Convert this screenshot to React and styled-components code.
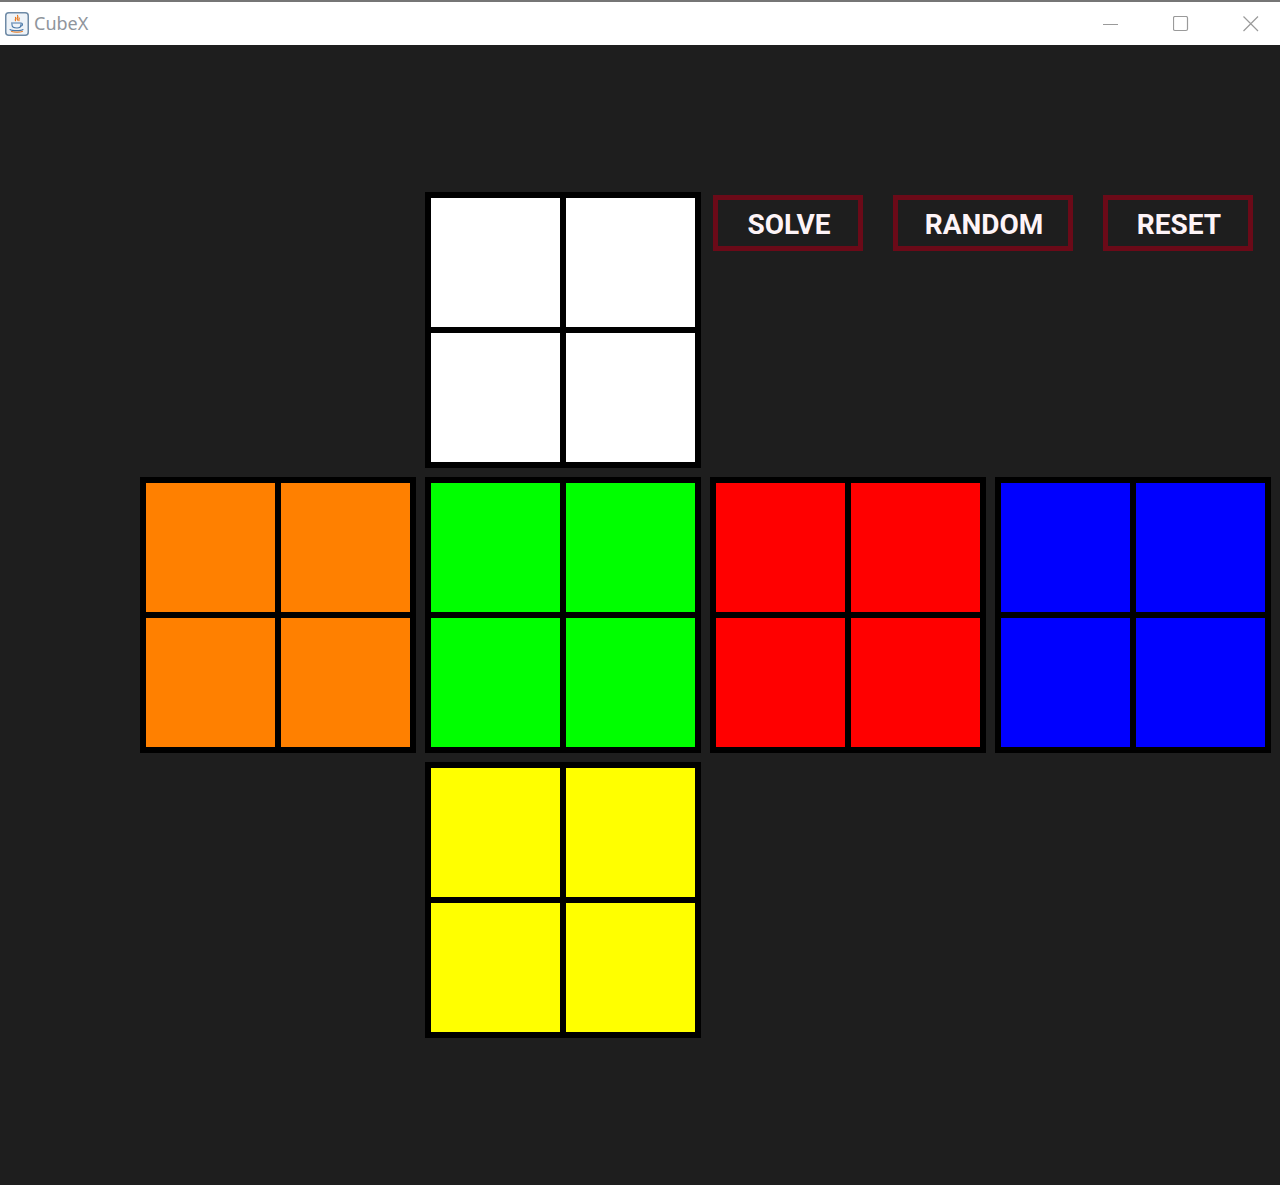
import React from "react";
import styled, { createGlobalStyle } from "styled-components";

const Global = createGlobalStyle`
  html, body { margin: 0; padding: 0; }
  body { background: #1e1e1e; font-family: "Roboto", "Liberation Sans", sans-serif; }
  #root { min-height: 1185px; }
`;

const Window = styled.div`
  width: 1280px;
  height: 1185px;
  display: flex;
  flex-direction: column;
  background: #1e1e1e;
  overflow: hidden;
`;

const TitleBar = styled.div`
  height: 43px;
  border-top: 2px solid #767676;
  background: #ffffff;
  display: flex;
  align-items: center;
  flex-shrink: 0;
`;

const AppIcon = styled.svg`
  margin-left: 5px;
  width: 24px;
  height: 24px;
  flex-shrink: 0;
`;

const Title = styled.span`
  margin-left: 5px;
  font-family: "Noto Sans", "Open Sans", sans-serif;
  font-size: 18px;
  color: #8f959c;
  line-height: 1;
  padding-bottom: 2px;
`;

const Controls = styled.div`
  margin-left: auto;
  padding-right: 21px;
  display: flex;
  align-items: center;
  gap: 54px;
  height: 100%;
`;

const ControlButton = styled.div`
  width: 16px;
  height: 16px;
  display: flex;
  align-items: center;
  justify-content: center;
  color: #9a9a9a;
`;

const Stage = styled.div`
  flex: 1;
  padding: 147px 0 0 140px;
`;

const Net = styled.div`
  display: grid;
  grid-template-columns: repeat(4, 276px);
  grid-template-rows: repeat(3, 276px);
  gap: 9px;
`;

const Face = styled.div`
  grid-column: ${(p) => p.$col};
  grid-row: ${(p) => p.$row};
  background: #000;
  padding: 6px;
  display: grid;
  grid-template-columns: 129px 129px;
  grid-template-rows: 129px 129px;
  gap: 6px;
`;

const Sticker = styled.div`
  background: ${(p) => p.$color};
`;

const ButtonBar = styled.div`
  grid-column: 3 / span 2;
  grid-row: 1;
  display: flex;
  align-items: flex-start;
  gap: 30px;
  padding: 3px 0 0 3px;
`;

const ActionButton = styled.button`
  width: ${(p) => p.$w}px;
  height: 56px;
  box-sizing: border-box;
  border: 5px solid #6b0a18;
  background: transparent;
  color: #fdf4f7;
  font-family: "Roboto", "Liberation Sans", sans-serif;
  font-weight: 700;
  font-size: 28px;
  letter-spacing: 0px;
  padding: 3px 0 0 2px;
  display: flex;
  align-items: center;
  justify-content: center;
  cursor: pointer;
`;

const faces = [
  { col: 2, row: 1, color: "#ffffff" },
  { col: 1, row: 2, color: "#ff8000" },
  { col: 2, row: 2, color: "#00ff00" },
  { col: 3, row: 2, color: "#ff0000" },
  { col: 4, row: 2, color: "#0000ff" },
  { col: 2, row: 3, color: "#ffff00" },
];

const buttons = [
  { label: "SOLVE", w: 150 },
  { label: "RANDOM", w: 180 },
  { label: "RESET", w: 150 },
];

export default function App() {
  return (
    <>
      <Global />
      <Window>
        <TitleBar>
          <AppIcon viewBox="0 0 24 24">
            <rect x="0.75" y="0.75" width="22.5" height="22.5" rx="3" fill="#eef3f8" stroke="#6e8aa6" strokeWidth="1.5" />
            <path d="M12.5 3.5c1.5 1.5-1.5 2.5 0 4.5M10.5 5.5c1 1-1 2 0 3.2M14 6c.8.8-.8 1.6 0 2.6" stroke="#e8761a" strokeWidth="1.2" fill="none" strokeLinecap="round" />
            <path d="M6 11h10c2 0 2 3 0 3h-1" stroke="#4a78a8" strokeWidth="1.1" fill="none" />
            <path d="M7 11.5v1.5c0 2 2 3 5 3s4-1 4-3v-1.5" stroke="#4a78a8" strokeWidth="1.1" fill="none" />
            <path d="M5 17.5c2 1.5 11 1.5 13 0" stroke="#4a78a8" strokeWidth="1.1" fill="none" strokeLinecap="round" />
            <path d="M6.5 19.5c2.5 1 8.5 1 11 0" stroke="#e8761a" strokeWidth="1" fill="none" strokeLinecap="round" />
          </AppIcon>
          <Title>CubeX</Title>
          <Controls>
            <ControlButton>
              <svg width="16" height="16" viewBox="0 0 16 16">
                <line x1="0" y1="8.5" x2="15" y2="8.5" stroke="currentColor" strokeWidth="1" />
              </svg>
            </ControlButton>
            <ControlButton>
              <svg width="16" height="16" viewBox="0 0 16 16">
                <rect x="0.5" y="0.5" width="14" height="14" rx="1.5" fill="none" stroke="currentColor" strokeWidth="1.2" />
              </svg>
            </ControlButton>
            <ControlButton>
              <svg width="16" height="16" viewBox="0 0 16 16">
                <path d="M0.5 0.5L15 15M15 0.5L0.5 15" stroke="currentColor" strokeWidth="1.2" />
              </svg>
            </ControlButton>
          </Controls>
        </TitleBar>
        <Stage>
          <Net>
            {faces.map((f, i) => (
              <Face key={i} $col={f.col} $row={f.row}>
                {[0, 1, 2, 3].map((k) => (
                  <Sticker key={k} $color={f.color} />
                ))}
              </Face>
            ))}
            <ButtonBar>
              {buttons.map((b) => (
                <ActionButton key={b.label} $w={b.w}>
                  {b.label}
                </ActionButton>
              ))}
            </ButtonBar>
          </Net>
        </Stage>
      </Window>
    </>
  );
}
